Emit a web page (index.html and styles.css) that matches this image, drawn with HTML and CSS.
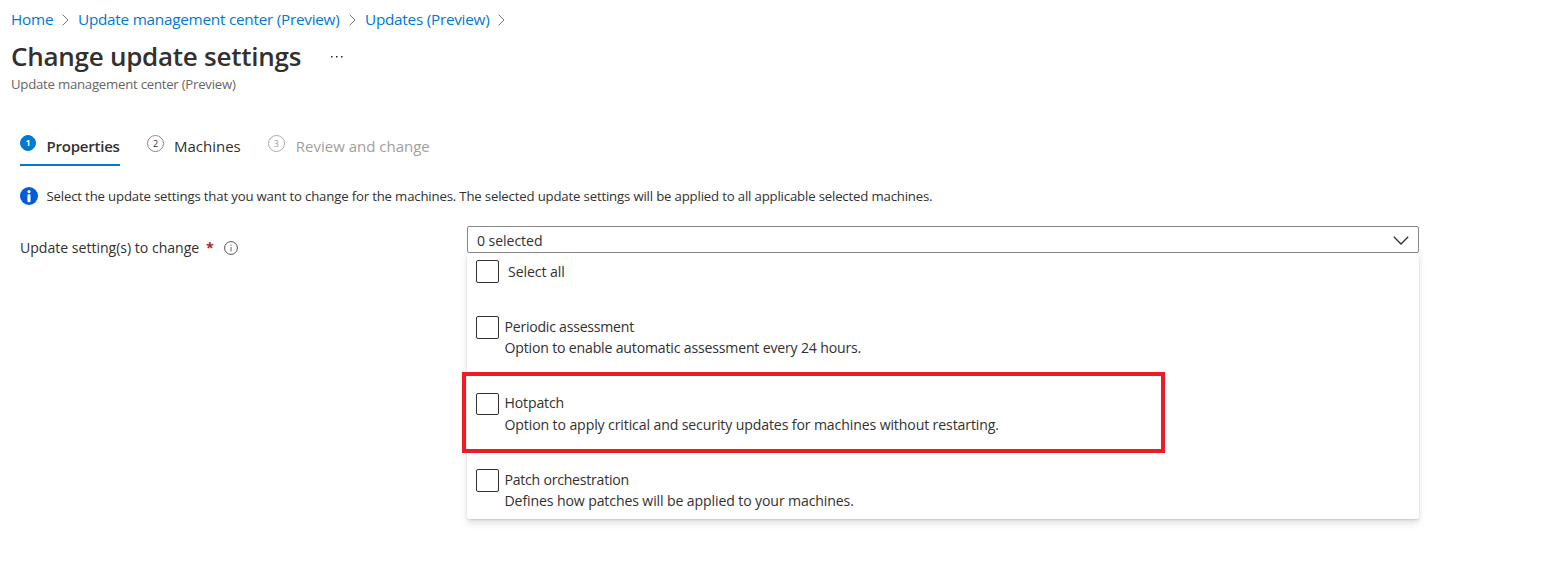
FILE: index.html
```html
<!DOCTYPE html>
<html lang="en">
<head>
<meta charset="utf-8">
<title>Change update settings</title>
<link rel="stylesheet" href="styles.css">
</head>
<body>
<nav class="breadcrumb">
  <a class="crumb crumb-home">Home</a>
  <svg class="sep" viewBox="0 0 7 12"><path d="M.7.7 6 6 .7 11.3"/></svg>
  <a class="crumb crumb-center">Update management center (Preview)</a>
  <svg class="sep" viewBox="0 0 7 12"><path d="M.7.7 6 6 .7 11.3"/></svg>
  <a class="crumb crumb-updates">Updates (Preview)</a>
  <svg class="sep" viewBox="0 0 7 12"><path d="M.7.7 6 6 .7 11.3"/></svg>
</nav>
<header class="heading">
  <div class="title-row">
    <h1 class="title">Change update settings</h1>
    <svg class="more" viewBox="0 0 14 2"><path d="M1 0h1.5v1.5H1zM6 0h1.5v1.5H6zM11 0h1.5v1.5H11z"/></svg>
  </div>
  <div class="subtitle">Update management center (Preview)</div>
</header>
<main class="content">
  <div class="tabs">
    <div class="tab tab-active"><span class="step">1</span><span class="tab-name">Properties</span></div>
    <div class="tab"><span class="step">2</span><span class="tab-name">Machines</span></div>
    <div class="tab tab-disabled"><span class="step">3</span><span class="tab-name">Review and change</span></div>
  </div>
  <div class="notice">
    <svg class="notice-icon" viewBox="0 0 18 18"><circle cx="9" cy="9" r="9" fill="#015cda"/><circle cx="9" cy="4.6" r="1.6" fill="#fff"/><rect x="7.5" y="7.3" width="3" height="8" rx=".8" fill="#fff"/></svg>
    <span class="notice-text">Select the update settings that you want to change for the machines. The selected update settings will be applied to all applicable selected machines.</span>
  </div>
  <div class="field">
    <div class="label">
      <span class="label-text">Update setting(s) to change</span>
      <span class="required">*</span>
      <svg class="info" viewBox="0 0 14 14"><circle cx="7" cy="7" r="6.4" fill="none" stroke="#555"/><path d="M6.5 3.6h1v1.2h-1zM6.5 6h1v4.5h-1z" fill="#666"/></svg>
    </div>
    <div class="dropdown">
      <div class="select">
        <span class="t-value">0 selected</span>
        <svg class="chevron" viewBox="0 0 16 9"><path d="M.8.8 8 8 15.2.8"/></svg>
      </div>
      <div class="menu">
        <div class="option option-all"><span class="box"></span><div class="option-text"><div class="t-all">Select all</div></div></div>
        <div class="option option-periodic"><span class="box"></span><div class="option-text"><div class="t-name">Periodic assessment</div><div class="t-periodic-desc">Option to enable automatic assessment every 24 hours.</div></div></div>
        <div class="option option-hotpatch"><span class="box box-short"></span><div class="option-text"><div class="t-hotpatch">Hotpatch</div><div class="t-desc">Option to apply critical and security updates for machines without restarting.</div></div></div>
        <div class="option option-patch"><span class="box"></span><div class="option-text"><div class="t-name">Patch orchestration</div><div class="t-desc">Defines how patches will be applied to your machines.</div></div></div>
        <div class="highlight"></div>
      </div>
    </div>
  </div>
</main>
</body>
</html>
```
FILE: styles.css
```css
* { box-sizing: border-box; }
body {
  margin: 0;
  height: 577px;
  overflow: hidden;
  background: #fff;
  color: #323130;
  font-family: "Open Sans", "Noto Sans", sans-serif;
  font-size: 14.1px;
  white-space: nowrap;
}
svg { display: block; flex: none; }

.breadcrumb {
  display: flex;
  align-items: center;
  height: 38px;
  padding-left: 11px;
  font-size: 15.3px;
  letter-spacing: -.25px;
}
.crumb { color: #0078d4; }
.crumb-home { width: 42px; }
.crumb-center { width: 262px; }
.crumb-updates { width: 124px; }
.sep {
  width: 7px;
  height: 12px;
  margin: 1px 9px 0;
  fill: none;
  stroke: #777;
}

.heading { height: 95px; padding-left: 11px; }
.title-row { display: flex; align-items: center; height: 36px; }
.title {
  width: 319px;
  margin: 0;
  font-size: 26px;
  font-weight: 600;
  line-height: 36px;
  letter-spacing: -.26px;
}
.more { width: 14px; height: 2px; margin-top: 2px; fill: #222; }
.subtitle { line-height: 20px; font-size: 13.2px; letter-spacing: -.24px; color: #666; }

.content { padding-left: 20px; }
.tabs { display: flex; gap: 27px; height: 33px; }
.tab { display: flex; height: 33px; font-size: 15px; }
.tab-active { width: 100px; border-bottom: 2px solid #0078d4; }
.tab-name { margin-left: 10px; line-height: 27px; }
.tab-active .tab-name { margin-left: 10.5px; font-weight: 600; letter-spacing: -.22px; }
.tab-disabled { color: #a19f9d; }
.tab-disabled .tab-name { margin-left: 11px; }
.step {
  width: 17px;
  height: 17px;
  margin-top: 2px;
  border: 1px solid #888;
  border-radius: 50%;
  font-size: 9px;
  line-height: 15px;
  text-align: center;
}
.tab-disabled .step { border-color: #aaa; }
.tab-active .step {
  width: 16px;
  height: 16px;
  border-color: #0078d4;
  background: #0078d4;
  color: #fff;
  font-weight: 700;
  line-height: 14px;
}

.notice { display: flex; align-items: center; height: 20px; margin-top: 20px; }
.notice-icon { width: 18px; height: 18px; }
.notice-text { margin-left: 8.5px; font-size: 13.2px; letter-spacing: -.17px; }

.field { display: flex; margin-top: 20px; }
.label { display: flex; align-items: center; width: 447px; height: 43px; }
.label-text { width: 186px; letter-spacing: -.02px; }
.required { width: 18px; color: #a4262c; font-weight: 700; }
.info { width: 14px; height: 14px; }

.dropdown { width: 952px; }
.select {
  position: relative;
  z-index: 1;
  display: flex;
  align-items: center;
  justify-content: space-between;
  height: 27px;
  padding: 1px 9px 0 9px;
  border: 1px solid #8a8886;
  border-radius: 2px;
  background: #fff;
}
.t-value, .t-all { letter-spacing: -.07px; }
.chevron { width: 16px; height: 9px; fill: none; stroke: #323130; stroke-width: 1.3; }
.menu {
  position: relative;
  height: 266px;
  padding: 7px 0 0 9px;
  border-radius: 2px;
  background: #fff;
  box-shadow: 0 3.2px 7.2px rgba(0, 0, 0, .13), 0 .6px 1.8px rgba(0, 0, 0, .11);
}
.option { display: flex; }
.option-all { height: 56px; }
.option-periodic { height: 76px; }
.option-hotpatch { height: 77px; }
.box {
  flex: none;
  width: 23px;
  height: 23px;
  border: 1px solid #323130;
  border-radius: 2px;
}
.box-short { height: 22px; margin-top: 1px; }
.option-text { margin-left: 5.5px; line-height: 21px; }
.option-hotpatch .option-text { line-height: 22px; }
.option-all .option-text { margin-left: 9px; line-height: 23px; }
.t-name { letter-spacing: -.24px; }
.t-periodic-desc { letter-spacing: -.18px; }
.t-hotpatch { letter-spacing: -.15px; }
.t-desc { letter-spacing: -.12px; }
.highlight {
  position: absolute;
  left: -5px;
  top: 119px;
  width: 703px;
  height: 81px;
  border: 4px solid #ed1c24;
}
```
